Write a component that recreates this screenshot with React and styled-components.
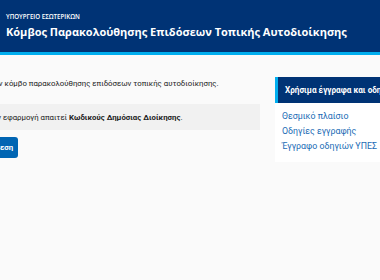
import React from 'react';
import styled, { createGlobalStyle } from 'styled-components';

const GlobalStyle = createGlobalStyle`
  html, body {
    margin: 0;
    padding: 0;
    background: #fafafa;
    font-family: Roboto, "Open Sans", sans-serif;
    overflow: hidden;
  }
`;

const Header = styled.header`
  background: #003375;
  border-bottom: 3px solid #00aeef;
  padding: 12px 0 0 6px;
  height: 40px;
  color: #fff;
  font-family: "Open Sans", "Noto Sans", sans-serif;
`;

const Ministry = styled.div`
  font-size: 6.2px;
  font-weight: 600;
  line-height: 10px;
`;

const Title = styled.h1`
  margin: 1px 0 0;
  font-size: 11px;
  font-weight: 700;
  line-height: 18px;
  white-space: nowrap;
`;

const Body = styled.div`
  display: flex;
  gap: 15px;
  padding-top: 22px;
`;

const Main = styled.main`
  width: 328px;
  flex: none;
  margin-left: -68px;
`;

const Intro = styled.p`
  margin: 0;
  font-size: 7.8px;
  line-height: 14px;
  color: #222;
  white-space: nowrap;
`;

const Notice = styled.div`
  margin-top: 13px;
  background: #f1f1f1;
  height: 26px;
  display: flex;
  align-items: center;
  padding-left: 13px;
  font-size: 7.8px;
  color: #222;
  white-space: nowrap;

  strong {
    font-weight: 700;
  }
`;

const Button = styled.button`
  display: block;
  margin-top: 7px;
  margin-left: ${p => p.$offset}px;
  height: 21px;
  padding: 0 5px 0 8px;
  border: none;
  border-radius: 3px;
  background: #0065b3;
  color: #fff;
  font-family: inherit;
  font-size: 7.8px;
  font-weight: 700;
`;

const Sidebar = styled.aside`
  width: 140px;
  flex: none;
`;

const SideHead = styled.div`
  background: #003375;
  border-left: 3px solid #00aeef;
  height: 26px;
  display: flex;
  align-items: center;
  padding-left: 7px;
  color: #fff;
  font-size: 8.2px;
  font-weight: 700;
  white-space: nowrap;
`;

const SideCard = styled.div`
  background: #fff;
  padding: 6px 0 8px 7px;
  display: flex;
  flex-direction: column;
`;

const SideLink = styled.a`
  color: #1a6bb5;
  font-size: 8.8px;
  line-height: 15px;
  text-decoration: none;
`;

export default function App() {
  return (
    <>
      <GlobalStyle />
      <Header>
        <Ministry>ΥΠΟΥΡΓΕΙΟ ΕΣΩΤΕΡΙΚΩΝ</Ministry>
        <Title>Κόμβος Παρακολούθησης Επιδόσεων Τοπικής Αυτοδιοίκησης</Title>
      </Header>
      <Body>
        <Main>
          <Intro>Καλώς ήρθατε στον κόμβο παρακολούθησης επιδόσεων τοπικής αυτοδιοίκησης.</Intro>
          <Notice>
            Η σύνδεση στην εφαρμογή απαιτεί&nbsp;<strong>Κωδικούς Δημόσιας Διοίκησης</strong>.
          </Notice>
          <Button $offset={43}>Σύνδεση</Button>
        </Main>
        <Sidebar>
          <SideHead>Χρήσιμα έγγραφα και οδηγίες</SideHead>
          <SideCard>
            <SideLink href="#">Θεσμικό πλαίσιο</SideLink>
            <SideLink href="#">Οδηγίες εγγραφής</SideLink>
            <SideLink href="#">Έγγραφο οδηγιών ΥΠΕΣ</SideLink>
          </SideCard>
        </Sidebar>
      </Body>
    </>
  );
}
